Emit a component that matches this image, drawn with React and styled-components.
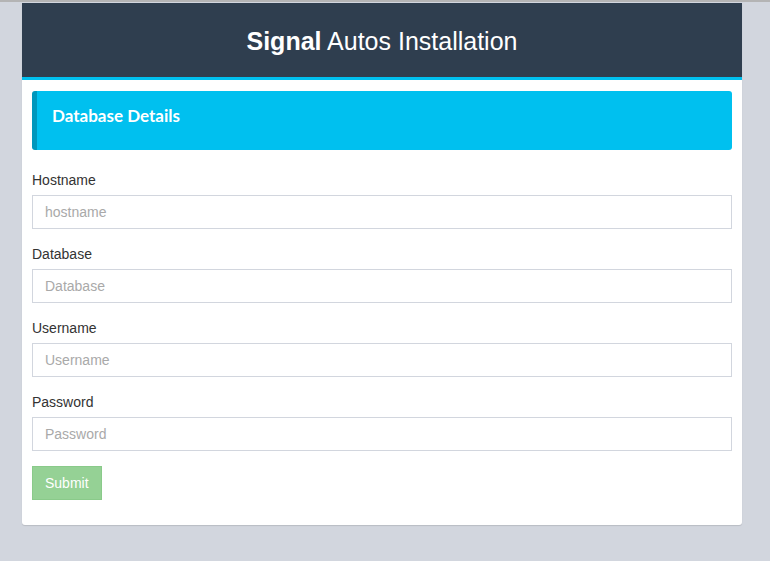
import React from "react";
import styled, { createGlobalStyle } from "styled-components";

const Global = createGlobalStyle`
  html, body { margin: 0; padding: 0; }
  body {
    background: #d2d6de;
    font-family: "Liberation Sans", Arial, sans-serif;
    font-size: 14px;
    color: #333;
    border-top: 2px solid #b4b4b4;
    min-height: 559px;
  }
`;

const Page = styled.div`
  padding: 1px 28px 0 22px;
`;

const Card = styled.div`
  width: 720px;
  background: #fff;
  border-radius: 0 0 3px 3px;
  box-shadow: 0 1px 1px rgba(0, 0, 0, 0.12);
`;

const Header = styled.div`
  height: 77px;
  padding-top: 2px;
  box-sizing: border-box;
  background: #2f3e4f;
  border-bottom: 3px solid #00c0ef;
  display: flex;
  align-items: center;
  justify-content: center;
  color: #fff;
  font-size: 25px;
`;

const Strong = styled.b`
  font-weight: bold;
`;

const Body = styled.div`
  padding: 11px 10px 25px 10px;
`;

const Callout = styled.div`
  background: #00c0ef;
  border-left: 5px solid #0097bc;
  border-radius: 3px;
  padding: 15px 30px 15px 15px;
  margin-bottom: 20px;
  color: #fff;
`;

const CalloutTitle = styled.h4`
  margin: 0 0 9px 0;
  font-family: Lato, "Open Sans", sans-serif;
  font-weight: 700;
  font-size: 17px;
  line-height: 20px;
`;

const Group = styled.div`
  margin-bottom: 15px;
`;

const Label = styled.label`
  display: block;
  line-height: 20px;
  margin-bottom: 5px;
  color: #333;
`;

const Input = styled.input`
  display: block;
  box-sizing: border-box;
  width: 100%;
  height: 34px;
  padding: 6px 12px;
  border: 1px solid #d2d6de;
  font-family: "Liberation Sans", Arial, sans-serif;
  font-size: 14px;
  color: #555;
  outline: none;
  &::placeholder { color: #a9a9a9; }
`;

const Button = styled.button`
  height: 34px;
  padding: 6px 12px;
  background: #95d195;
  border: 1px solid #8aca8a;
  color: #fff;
  font-family: "Liberation Sans", Arial, sans-serif;
  font-size: 14px;
  font-weight: normal;
  border-radius: 0;
`;

const fields = [
  ["Hostname", "hostname"],
  ["Database", "Database"],
  ["Username", "Username"],
  ["Password", "Password"],
];

export default function App() {
  return (
    <>
      <Global />
      <Page>
        <Card>
          <Header>
            <span>
              <Strong>Signal</Strong> Autos Installation
            </span>
          </Header>
          <Body>
            <Callout>
              <CalloutTitle>Database Details</CalloutTitle>
            </Callout>
            {fields.map(([l, p]) => (
              <Group key={l}>
                <Label>{l}</Label>
                <Input placeholder={p} type={l === "Password" ? "password" : "text"} />
              </Group>
            ))}
            <Button disabled>Submit</Button>
          </Body>
        </Card>
      </Page>
    </>
  );
}
